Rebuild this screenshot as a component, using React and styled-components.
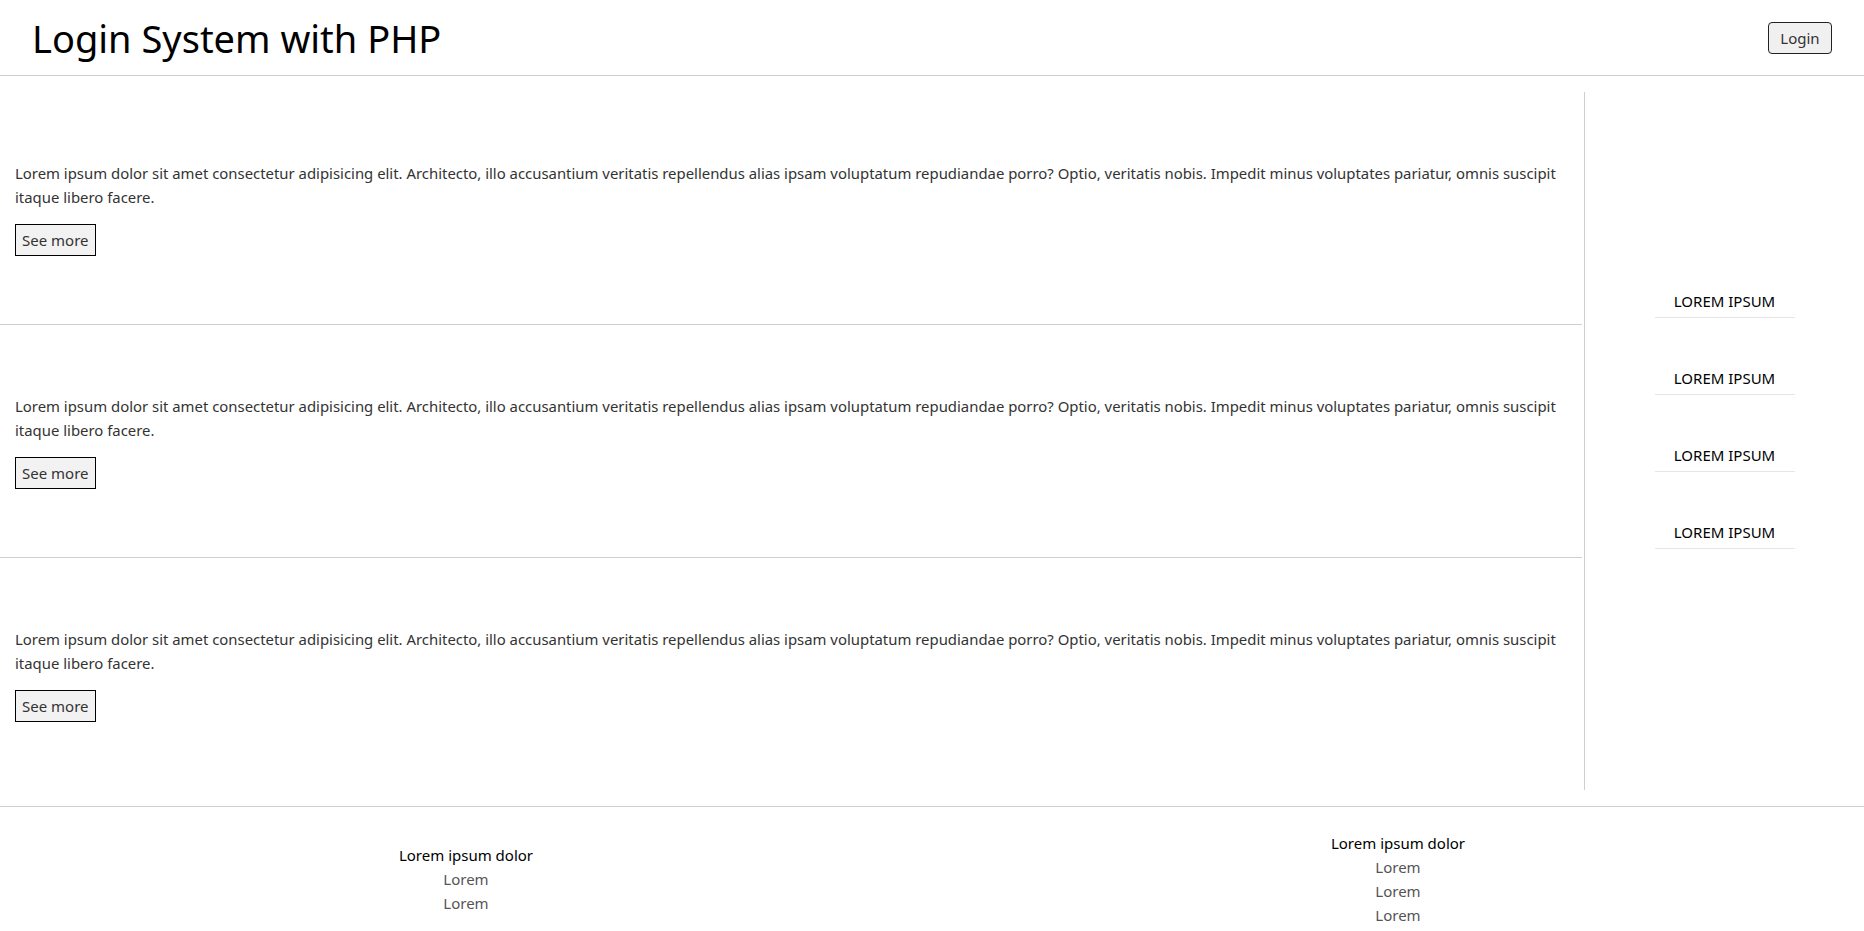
import React from "react";
import styled, { createGlobalStyle } from "styled-components";

const GlobalStyle = createGlobalStyle`
  * {
    box-sizing: border-box;
  }
  body {
    margin: 0;
    background: #fff;
    font-family: "Noto Sans", "Liberation Sans", sans-serif;
    color: #333;
  }
`;

const LOREM =
  "Lorem ipsum dolor sit amet consectetur adipisicing elit. Architecto, illo accusantium veritatis repellendus alias ipsam voluptatum repudiandae porro? Optio, veritatis nobis. Impedit minus voluptates pariatur, omnis suscipit itaque libero facere.";

const App = () => {
  const posts = [1, 2, 3];
  const links = ["Lorem ipsum", "Lorem ipsum", "Lorem ipsum", "Lorem ipsum"];

  return (
    <>
      <GlobalStyle />
      <Header>
        <Title>Login System with PHP</Title>
        <LoginButton>Login</LoginButton>
      </Header>
      <Main>
        <Posts>
          {posts.map((p) => (
            <Post key={p} last={p === posts.length}>
              <PostText>{LOREM}</PostText>
              <SeeMore>See more</SeeMore>
            </Post>
          ))}
        </Posts>
        <Sidebar>
          {links.map((l, i) => (
            <SideLink key={i}>{l}</SideLink>
          ))}
        </Sidebar>
      </Main>
      <Footer>
        <FooterCol>
          <FooterTitle>Lorem ipsum dolor</FooterTitle>
          <FooterItem>Lorem</FooterItem>
          <FooterItem>Lorem</FooterItem>
        </FooterCol>
        <FooterCol>
          <FooterTitle>Lorem ipsum dolor</FooterTitle>
          <FooterItem>Lorem</FooterItem>
          <FooterItem>Lorem</FooterItem>
          <FooterItem>Lorem</FooterItem>
        </FooterCol>
      </Footer>
    </>
  );
};

const Header = styled.header`
  display: flex;
  align-items: center;
  justify-content: space-between;
  height: 76px;
  padding: 0 32px;
  border-bottom: 1px solid #cfcfcf;
`;

const Title = styled.h1`
  margin: 0;
  font-size: 38px;
  font-weight: 400;
  color: #000;
`;

const LoginButton = styled.button`
  width: 64px;
  height: 32px;
  padding: 0;
  font-family: inherit;
  font-size: 15px;
  color: #333;
  background: #f0f0f0;
  border: 1px solid #222;
  border-radius: 4px;
`;

const Main = styled.main`
  display: flex;
  padding: 16px 0;
  height: 730px;
`;

const Posts = styled.div`
  flex: 1;
  display: flex;
  flex-direction: column;
`;

const Post = styled.article`
  flex: 1;
  display: flex;
  flex-direction: column;
  justify-content: center;
  align-items: flex-start;
  padding: 0 15px;
  margin-right: 2px;
  border-bottom: ${({ last }) => (last ? "none" : "1px solid #cfcfcf")};
`;

const PostText = styled.p`
  margin: 0 0 15px;
  font-size: 14.9px;
  line-height: 24px;
  color: #333;
`;

const SeeMore = styled.button`
  height: 32px;
  padding: 0 6px;
  font-family: inherit;
  font-size: 15px;
  color: #333;
  background: #f2f2f2;
  border: 1px solid #000;
  border-radius: 0;
`;

const Sidebar = styled.aside`
  width: 280px;
  border-left: 1px solid #cfcfcf;
  display: flex;
  flex-direction: column;
  align-items: center;
  padding-top: 198px;
  gap: 49px;
`;

const SideLink = styled.a`
  display: block;
  width: 140px;
  padding-bottom: 5px;
  text-align: center;
  text-transform: uppercase;
  font-size: 15px;
  font-weight: 400;
  line-height: 22px;
  color: #000;
  border-bottom: 1px solid #e6e6e6;
`;

const Footer = styled.footer`
  display: flex;
  align-items: center;
  padding: 24px 0;
  border-top: 1px solid #cfcfcf;
`;

const FooterCol = styled.div`
  flex: 1;
  display: flex;
  flex-direction: column;
  align-items: center;
`;

const FooterTitle = styled.div`
  font-size: 15px;
  font-weight: 400;
  line-height: 24px;
  color: #000;
`;

const FooterItem = styled.div`
  font-size: 15px;
  line-height: 24px;
  color: #555;
`;

export default App;
